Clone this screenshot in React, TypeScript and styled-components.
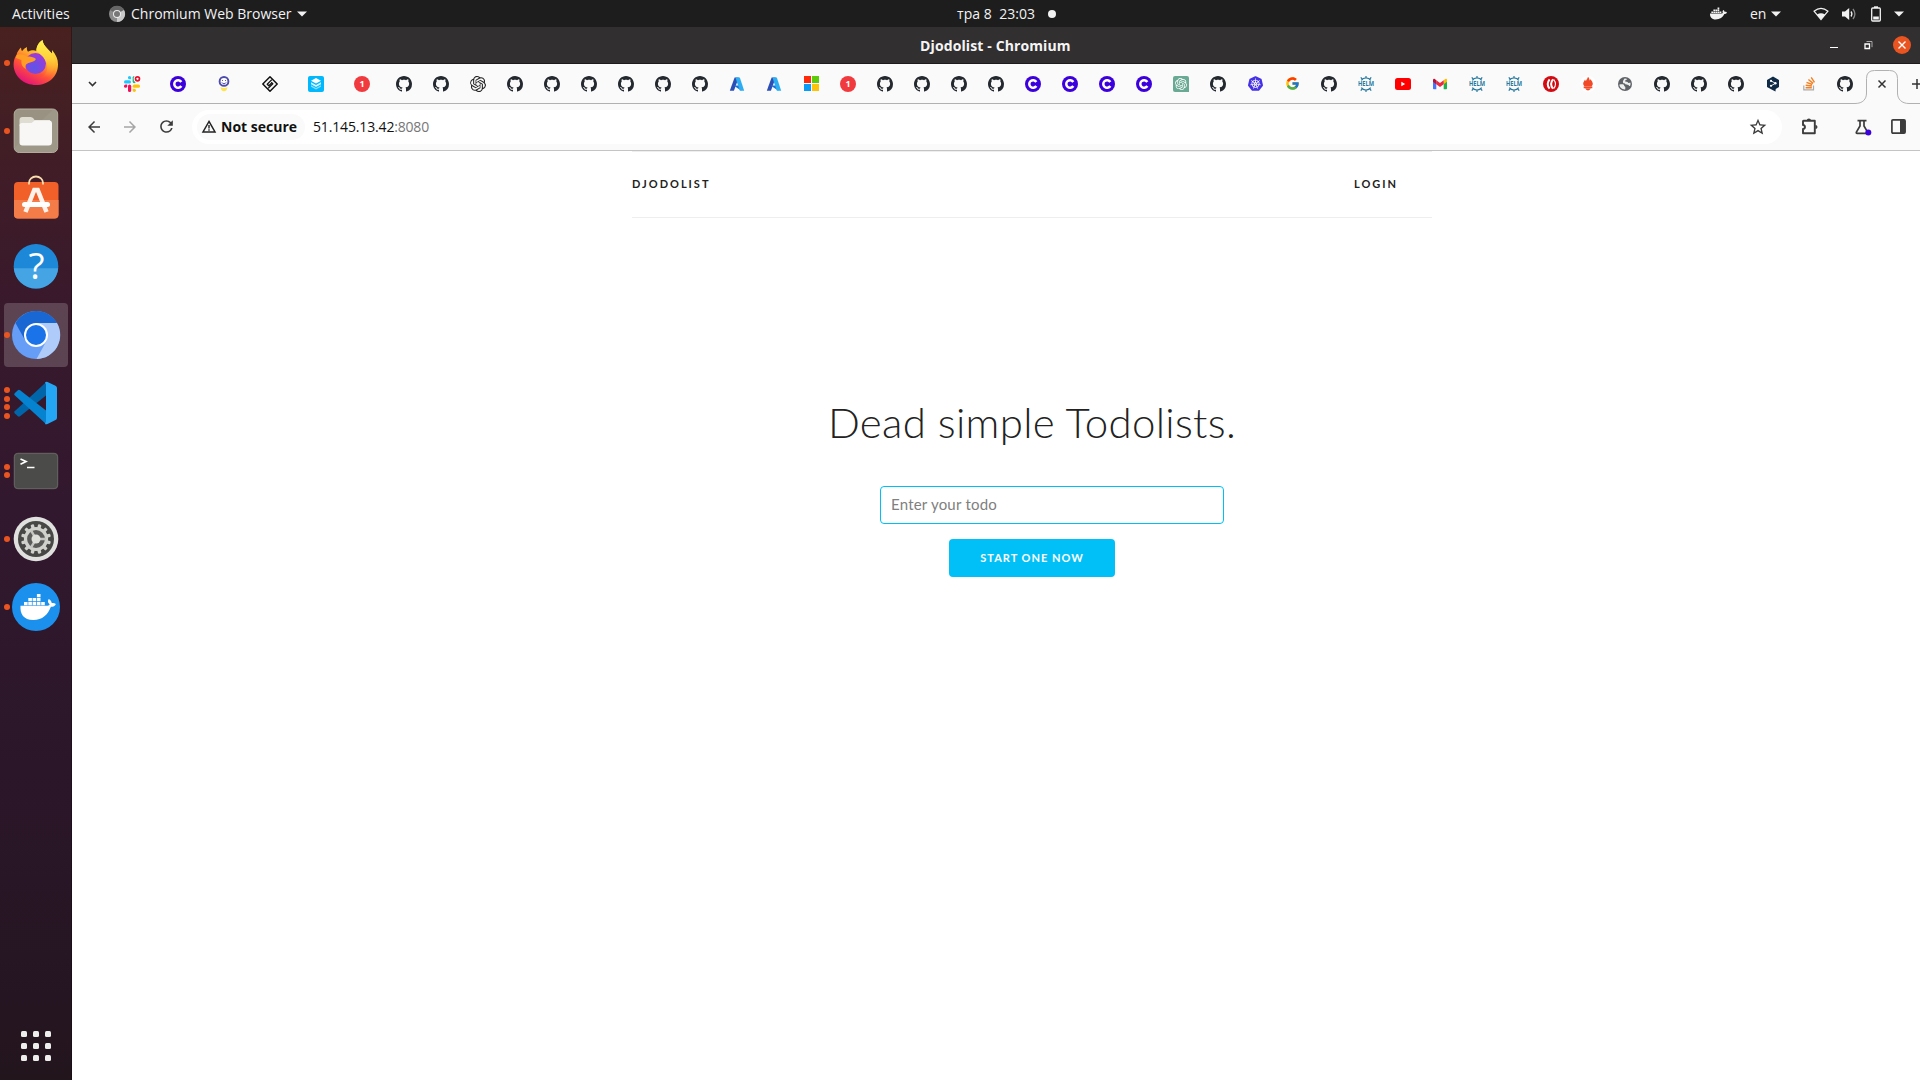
import React from 'react';
import styled, { createGlobalStyle } from 'styled-components';
import { FaDocker } from 'react-icons/fa';
import { FcGoogle } from 'react-icons/fc';
import { SiOpenai, SiKubernetes } from 'react-icons/si';
import { MdArrowBack, MdArrowForward, MdRefresh, MdStarOutline } from 'react-icons/md';

const GlobalStyle = createGlobalStyle`
  * { box-sizing: border-box; }
  html, body { margin: 0; padding: 0; overflow: hidden; background: #fff; }
  svg { display: block; flex: none; overflow: visible; }
`;

const Desktop = styled.div`
  width: 1920px;
  height: 1080px;
  display: flex;
  flex-direction: column;
  overflow: hidden;
  font-family: 'Open Sans', 'Noto Sans', sans-serif;
`;

const TopBar = styled.header`
  height: 27px;
  flex: none;
  background: #1d1d1d;
  color: #f2f2f2;
  display: grid;
  grid-template-columns: 957px 1fr 220px;
  align-items: center;
`;

const BarGroup = styled.div<{ $left?: number }>`
  display: flex;
  align-items: center;
  height: 27px;
  padding-left: ${(p) => p.$left ?? 0}px;
`;

const Label = styled.span<{ $w?: number; $size?: number; $spacing?: number; $bold?: boolean; $color?: string; $pad?: number }>`
  display: block;
  flex: none;
  white-space: pre;
  width: ${(p) => (p.$w ? `${p.$w}px` : 'auto')};
  padding-left: ${(p) => p.$pad ?? 0}px;
  font-size: ${(p) => p.$size ?? 14}px;
  letter-spacing: ${(p) => p.$spacing ?? 0}px;
  font-weight: ${(p) => (p.$bold ? 700 : 400)};
  color: ${(p) => p.$color ?? 'inherit'};
  line-height: 20px;
`;

const Slot = styled.span<{ $w: number }>`
  width: ${(p) => p.$w}px;
  flex: none;
  display: flex;
  align-items: center;
  justify-content: center;
`;

const Status = styled.div`
  display: flex;
  align-items: center;
  gap: 13px;
  padding-left: 32px;
`;

const Dot = styled.span`
  width: 8px;
  height: 8px;
  border-radius: 50%;
  background: #f2f2f2;
  margin-left: 13px;
`;

const Work = styled.div`
  flex: 1;
  display: flex;
  min-height: 0;
`;

const Dock = styled.nav`
  width: 72px;
  flex: none;
  display: flex;
  flex-direction: column;
  align-items: center;
  gap: 4px;
  padding: 4px 0 2px;
  background: linear-gradient(180deg, #48211f 0%, #411d26 12%, #39192b 25%, #32182e 45%, #2b1629 70%, #251522 92%, #23151c 100%);
  border-right: 1px solid rgba(0, 0, 0, 0.3);
`;

const DockItem = styled.div<{ $active?: boolean }>`
  position: relative;
  width: 64px;
  height: 64px;
  flex: none;
  border-radius: 4px;
  display: flex;
  align-items: center;
  justify-content: center;
  background: ${(p) => (p.$active ? 'rgba(255,255,255,0.19)' : 'transparent')};
`;

const Running = styled.div`
  position: absolute;
  left: 0;
  top: 0;
  height: 64px;
  display: flex;
  flex-direction: column;
  justify-content: center;
  gap: 2.8px;
`;

const RunDot = styled.span`
  width: 6px;
  height: 6px;
  border-radius: 50%;
  background: #e95420;
`;

const AppGrid = styled.div`
  margin-top: auto;
  width: 64px;
  height: 64px;
  display: grid;
  grid-template-columns: repeat(3, 6px);
  grid-auto-rows: 6px;
  gap: 6px;
  place-content: center;
`;

const GridDot = styled.span`
  background: #eeeeec;
  border-radius: 1.5px;
`;

const Window = styled.main`
  flex: 1;
  min-width: 0;
  display: flex;
  flex-direction: column;
`;

const TitleBar = styled.div`
  height: 37px;
  flex: none;
  background: #322f30;
  border-bottom: 1px solid #1d1b1c;
  color: #f5f5f5;
  display: grid;
  grid-template-columns: 848px 1fr 107px;
  align-items: center;
`;

const WindowTitle = styled(Label)`
  padding-top: 2px;
`;

const Controls = styled.div`
  display: flex;
  align-items: center;
`;

const TabStrip = styled.div`
  height: 40px;
  flex: none;
  display: flex;
  align-items: stretch;
  background: #fafafa;
  overflow: hidden;
`;

const TabCell = styled.div<{ $w: number; $pad?: number }>`
  width: ${(p) => p.$w}px;
  padding-left: ${(p) => p.$pad ?? 0}px;
  flex: none;
  display: flex;
  align-items: center;
  justify-content: center;
  border-bottom: 1px solid #b1b1b1;
`;

const TabShape = styled.div`
  width: 54px;
  height: 40px;
  flex: none;
`;

const Toolbar = styled.div`
  height: 47px;
  flex: none;
  background: #fafafa;
  border-bottom: 1px solid #c4c4c4;
  display: flex;
  align-items: center;
  padding: 0 0 1px 4px;
  color: #3c3c3c;
`;

const Omnibox = styled.div`
  width: 1590px;
  height: 34px;
  border-radius: 17px;
  background: #fff;
  margin-left: 8px;
  display: flex;
  align-items: center;
  padding: 0 11px 0 5px;
`;

const Chip = styled.div`
  width: 108px;
  height: 26px;
  border-radius: 13px;
  background: #fafafa;
  display: flex;
  align-items: center;
  padding-left: 5px;
  gap: 5px;
  margin-right: 8px;
  color: #111;
`;

const Push = styled.span`
  margin-left: auto;
`;

const Page = styled.section`
  flex: 1;
  background: #fff;
  font-family: Lato, 'Open Sans', sans-serif;
  color: #222;
  padding-left: 72px;
`;

const Container = styled.div`
  width: 800px;
  margin: 0 auto;
  display: flex;
  flex-direction: column;
  align-items: center;
`;

const NavBar = styled.div`
  width: 800px;
  height: 67px;
  border-top: 1px solid #eee;
  border-bottom: 1px solid #eee;
  display: flex;
  justify-content: space-between;
  align-items: center;
  padding: 0 34px 2px 0;
`;

const NavLink = styled.a`
  font-size: 11px;
  font-weight: 700;
  letter-spacing: 2px;
  color: #222;
  text-transform: uppercase;
`;

const Heading = styled.h1`
  margin: 179px 0 0;
  font-size: 42px;
  line-height: 50px;
  font-weight: 300;
  letter-spacing: 0.3px;
  white-space: nowrap;
`;

const TodoInput = styled.input`
  width: 344px;
  height: 38px;
  margin: 39px 0 0 40px;
  padding: 4px 10px 6px;
  border: 1px solid #00bff3;
  border-radius: 4px;
  font-family: inherit;
  font-size: 15px;
  letter-spacing: 0.22px;
  outline: none;
  &::placeholder { color: #808080; opacity: 1; }
`;

const StartButton = styled.button`
  width: 166px;
  height: 38px;
  margin-top: 15px;
  padding: 0 0 2px;
  border: 0;
  border-radius: 4px;
  background: #00c0f7;
  color: #fff;
  font-family: inherit;
  font-size: 11px;
  font-weight: 700;
  letter-spacing: 1px;
`;

const Caret = () => (
  <svg width="10" height="6" viewBox="0 0 10 6"><path d="M0 .5h10L5 5.500z" fill="#f2f2f2" /></svg>
);

const WifiIcon = () => (
  <svg width="16" height="14" viewBox="0 0 16 14">
    <path d="M1 4.200Q8-1.600 15 4.200L8 12.500z" fill="none" stroke="#f2f2f2" strokeWidth="1.200" />
    <path d="M4 7.500Q8 5 12 7.500L8 12.600z" fill="#f2f2f2" />
  </svg>
);

const SoundIcon = () => (
  <svg width="16" height="14" viewBox="0 0 16 14">
    <path d="M0 4.500h3L7.200 1v12L3 9.500H0z" fill="#f2f2f2" />
    <path d="M9 4.500q1.800 2.500 0 5" fill="none" stroke="#f2f2f2" strokeWidth="1.300" />
    <path d="M11 2q3.800 5 0 10" fill="none" stroke="#858585" strokeWidth="1.300" />
  </svg>
);

const BatteryIcon = () => (
  <svg width="10" height="16" viewBox="0 0 10 16">
    <path d="M3 .3h4V2H3z" fill="#f2f2f2" />
    <rect x=".7" y="2" width="8.600" height="13" rx="1" fill="none" stroke="#f2f2f2" strokeWidth="1.300" />
    <path d="M2.200 10.500h5.600v3H2.200z" fill="#f2f2f2" />
  </svg>
);

const ChromiumMono = () => (
  <svg width="16" height="16" viewBox="0 0 16 16">
    <circle cx="8" cy="8" r="8" fill="#8b8b8b" />
    <path d="M8 8 1 4A8 8 0 0 1 15 4z" fill="#666" />
    <path d="M8 8 15 4A8 8 0 0 1 8 16z" fill="#c9c9c9" />
    <circle cx="8" cy="8" r="4" fill="#ececec" />
    <circle cx="8" cy="8" r="3" fill="#777" />
  </svg>
);

const GithubIcon = () => (
  <svg width="16" height="16" viewBox="0 0 16 16">
    <path fill="#24292f" d="M8 0C3.58 0 0 3.58 0 8c0 3.54 2.29 6.53 5.47 7.59.4.07.55-.17.55-.38 0-.19-.01-.82-.01-1.49-2.01.37-2.53-.49-2.69-.94-.09-.23-.48-.94-.82-1.13-.28-.15-.68-.52-.01-.53.63-.01 1.08.58 1.23.82.72 1.21 1.87.87 2.33.66.07-.52.28-.87.51-1.07-1.78-.2-3.64-.89-3.64-3.95 0-.87.31-1.59.82-2.15-.08-.2-.36-1.02.08-2.12 0 0 .67-.21 2.2.82.64-.18 1.32-.27 2-.27.68 0 1.36.09 2 .27 1.53-1.04 2.2-.82 2.2-.82.44 1.1.16 1.92.08 2.12.51.56.82 1.27.82 2.15 0 3.07-1.87 3.75-3.65 3.95.29.25.54.73.54 1.48 0 1.07-.01 1.93-.01 2.2 0 .21.15.46.55.38A8.013 8.013 0 0 0 16 8c0-4.42-3.58-8-8-8z" />
  </svg>
);

const SlackIcon = () => (
  <svg width="16" height="16" viewBox="0 0 16 16">
    <g fill="#1ec8ff">
      <rect x="0" y="4.300" width="7" height="3.200" rx="1.600" /><path d="M3.900 1.600a1.600 1.600 0 0 1 3.200 0v1.700H5.500a1.600 1.600 0 0 1-1.600-1.700z" />
    </g>
    <rect x="8.600" y="0" width="3.200" height="7.200" rx="1.600" fill="#20b486" />
    <g fill="#ffc107">
      <rect x="8.700" y="8.600" width="7.300" height="3.200" rx="1.600" /><path d="M8.700 12.700h1.600a1.600 1.600 0 1 1-1.600 1.600z" />
    </g>
    <g fill="#f0105a">
      <rect x="4" y="8.600" width="3.200" height="7.400" rx="1.600" /><path d="M3.200 8.600v1.600a1.600 1.600 0 1 1-1.600-1.600z" />
    </g>
    <circle cx="13.500" cy="2.800" r="3.800" fill="#fff" />
    <circle cx="13.500" cy="2.800" r="2" fill="#fff" stroke="#e8112d" strokeWidth="1.700" />
  </svg>
);

const CIcon = () => (
  <svg width="16" height="16" viewBox="0 0 16 16">
    <circle cx="8" cy="8" r="8" fill="#3c00dc" />
    <path d="M11.300 6A3.800 3.800 0 1 0 11.300 10" fill="none" stroke="#fff" strokeWidth="2.500" />
  </svg>
);

const BulbIcon = () => (
  <svg width="12" height="16" viewBox="0 0 12 16">
    <circle cx="6" cy="5.400" r="4.400" fill="#fff" stroke="#4e4aae" strokeWidth="1.900" />
    <path d="M4 4.500h.9M7.100 4.500H8M3.900 6.400a2.300 2.300 0 0 0 4.200 0" fill="none" stroke="#4e4aae" strokeWidth="1" />
    <path d="M2.400 11.300Q6 12.600 9.600 11.300L8.400 14.300Q6 16.400 3.600 14.300z" fill="#ffe44d" />
  </svg>
);

const DiamondIcon = () => (
  <svg width="16" height="16" viewBox="0 0 16 16" fill="none" stroke="#111" strokeWidth="1.500" strokeLinejoin="round">
    <path d="M8 .8 15.200 8 8 15.200.8 8z" />
    <path d="M9.800 3.600 5.200 8.200l1.600 1.600 3.400-3.400M6.200 12.400l4.600-4.600-1.600-1.600" strokeWidth="1.300" />
  </svg>
);

const StackIcon = () => (
  <svg width="16" height="16" viewBox="0 0 16 16">
    <rect width="16" height="16" rx="2" fill="#00b8fb" />
    <path d="m8 2 5 2.700-5 2.700-5-2.700z" fill="#fff" />
    <path d="m3 6.300 5 2.700 5-2.700v2l-5 2.700-5-2.700z" fill="#d4f2ff" />
    <path d="m3 9.300 5 2.700 5-2.700v1.500l-5 2.700-5-2.700z" fill="#8adcff" />
  </svg>
);

const OneIcon = () => (
  <svg width="16" height="16" viewBox="0 0 16 16">
    <circle cx="8" cy="8" r="8" fill="#f03a3e" />
    <text x="8" y="11.200" textAnchor="middle" fontFamily="Open Sans, sans-serif" fontSize="9" fontWeight="700" fill="#fff">1</text>
  </svg>
);

const AzureIcon = () => (
  <svg width="16" height="16" viewBox="0 0 16 16">
    <path d="M5.600 1.500h4.200L4.900 14.700H.8z" fill="#2b4fb5" />
    <path d="M4.500 9.400h6.800l2 4-1.200 1.200z" fill="#1f6fd6" />
    <path d="M6.500 1.500h4.300l4.400 13.200h-4.300L7.700 5.400z" fill="#2daef2" />
  </svg>
);

const MicrosoftIcon = () => (
  <svg width="15" height="15" viewBox="0 0 15 15">
    <path d="M0 0h7v7H0z" fill="#ff2a0a" /><path d="M8 0h7v7H8z" fill="#5ccb0a" />
    <path d="M0 8h7v7H0z" fill="#0a9cf5" /><path d="M8 8h7v7H8z" fill="#ffc20a" />
  </svg>
);

const GptIcon = () => (
  <svg width="16" height="16" viewBox="0 0 16 16">
    <path d="M2 0h12a2 2 0 0 1 2 2v14H2a2 2 0 0 1-2-2V2a2 2 0 0 1 2-2z" fill="#6aaa95" />
    <g transform="translate(2 2)"><SiOpenai size={12} color="#fff" /></g>
  </svg>
);

const KubeIcon = () => <SiKubernetes size={15} color="#4632e6" />;

const HelmIcon = () => (
  <svg width="16" height="16" viewBox="0 0 16 16" fill="none" stroke="#277a9f" strokeWidth="1.200">
    <path d="M3.300 4.300a5.800 5.800 0 0 1 9.400 0M3.300 11.700a5.800 5.800 0 0 0 9.400 0M8 2V0M8 14v2M4.200 3.200 2.800 1.400M11.800 3.200l1.400-1.800M4.200 12.800l-1.400 1.800M11.800 12.800l1.400 1.800" />
    <text x="8" y="10.300" textAnchor="middle" textLength="16" lengthAdjust="spacingAndGlyphs" fontFamily="Open Sans, sans-serif" fontSize="6.500" fontWeight="700" fill="#277a9f" stroke="none">HELM</text>
  </svg>
);

const YoutubeIcon = () => (
  <svg width="16" height="12" viewBox="0 0 16 12">
    <rect width="16" height="12" rx="2.500" fill="#f00" /><path d="M6.300 3.800v4.400L10.200 6z" fill="#fff" />
  </svg>
);

const GmailIcon = () => (
  <svg width="14" height="12" viewBox="0 0 14 12">
    <path d="M0 2v8.500c0 .5.4.8.8.8H3.300V4z" fill="#4a73f5" />
    <path d="M14 2v8.500c0 .5-.4.8-.8.8h-2.500V4z" fill="#1fb14c" />
    <path d="M10.700 2.200 12.300 1C13.300.4 14 1 14 2.100v1.700l-3.300 2.500z" fill="#fbbc04" />
    <path d="M3.300 6.300V2.200L7 5l3.700-2.800v4.100L7 9.100z" fill="#ea2a3f" />
    <path d="M0 2.100C0 1 1 .3 1.800 1l1.500 1.200v4.100L0 3.800z" fill="#b70f35" />
  </svg>
);

const RedRingIcon = () => (
  <svg width="16" height="16" viewBox="0 0 16 16">
    <circle cx="8" cy="8" r="8" fill="#d20a11" />
    <path d="M6.600 3.300Q2.800 8 6.600 12.700M10 3.300Q6.200 8 10 12.700" fill="none" stroke="#fff" strokeWidth="2" />
    <path d="M10.600 3.300Q14.400 8 10.600 12.700" fill="none" stroke="#fff" strokeWidth="1.100" />
  </svg>
);

const PrometheusIcon = () => (
  <svg width="16" height="16" viewBox="0 0 16 16">
    <circle cx="8" cy="8" r="8" fill="#fff" />
    <path d="M8 .8c1.700 1.600 1.400 3.200 1.600 3.800.6-.4.8-1 .8-1.700 1.500 2 2.300 3.400 2.400 4.600 0 1.400-.7 2.200-1.200 2.700H4.400c-.7-.8-1.200-1.400-1.200-2.700.1-1.200.9-2.200 1.800-4 .2.8.6 1.200 1 1.500C6.200 4 7.400 3 8 .8zM3.700 10.500h8.600v1.800H3.700zM5.200 12.600h5.600Q8 16.500 5.200 12.600z" fill="#f04a28" />
  </svg>
);

const GlobeIcon = () => (
  <svg width="14" height="14" viewBox="0 0 14 14">
    <circle cx="7" cy="7" r="7" fill="#5f6368" />
    <path d="M1.400 7.600C3 7.500 4.500 7 5.500 7.600c1 .8.3 1.500 1.300 1.900.9.400.5 1.300.4 2.900-3 .3-5.700-1.700-5.800-4.800zM6.500 1.500c1.200-.1 2 .1 2.800.5-.3 1-1.800.8-2 1.500-.2 1 .3 1.300 1.300 1.200 1-.2 1.300 1 2 1.200.6.200 1.200-.3 1.900-.1.200 1.200 0 2.400-.5 3.300-1 .1-1.200-1-2.100-1.300-1-.3-2 .1-2.600-.8-.5-.8-1.700-.5-2.200-1.300-.5-1 .2-2.700 1.400-4.200z" fill="#fafafa" opacity=".92" />
  </svg>
);

const DeeplIcon = () => (
  <svg width="14" height="16" viewBox="0 0 14 16">
    <path d="M7 .5 13 4v7l-3.300 2-.2 2.500-2.500-1.300L1 11V4z" fill="#0f2b46" />
    <path d="m5 4.800 4.300 2.500L5 9.900" fill="none" stroke="#fff" strokeWidth=".9" />
    <circle cx="5" cy="4.900" r="1.100" fill="#fff" /><circle cx="9.400" cy="7.300" r="1.200" fill="#fff" /><circle cx="5" cy="9.800" r="1.100" fill="#fff" />
  </svg>
);

const OverflowIcon = () => (
  <svg width="13" height="15" viewBox="0 0 13 15" fill="none">
    <path d="M.8 9.600v4.200h9.700V9.600" stroke="#aaa" strokeWidth="1.200" />
    <path d="M2.600 11.700h6.200M2.700 9.200l6.200.8M3.500 6.400l5.800 2.100M5.400 3.500l4.700 3.900M8.200 1.400l3.300 5" stroke="#f48024" strokeWidth="1.400" />
  </svg>
);

const DarkGpt = () => <SiOpenai size={16} color="#222" />;
const GoogleIcon = () => <FcGoogle size={15} />;

const pinned = [SlackIcon, CIcon, BulbIcon, DiamondIcon, StackIcon, OneIcon];
const tabs = [
  GithubIcon, GithubIcon, DarkGpt,
  GithubIcon, GithubIcon, GithubIcon, GithubIcon, GithubIcon, GithubIcon,
  AzureIcon, AzureIcon, MicrosoftIcon, OneIcon,
  GithubIcon, GithubIcon, GithubIcon, GithubIcon,
  CIcon, CIcon, CIcon, CIcon,
  GptIcon, GithubIcon, KubeIcon, GoogleIcon, GithubIcon, HelmIcon, YoutubeIcon, GmailIcon,
  HelmIcon, HelmIcon, RedRingIcon, PrometheusIcon, GlobeIcon,
  GithubIcon, GithubIcon, GithubIcon, DeeplIcon,
];

const FirefoxApp = () => (
  <svg width="46" height="48" viewBox="0 0 46 48">
    <defs>
      <linearGradient id="ffBody" x1=".8" y1=".1" x2=".3" y2="1">
        <stop offset="0" stopColor="#fff04a" /><stop offset=".35" stopColor="#ffb02a" />
        <stop offset=".65" stopColor="#ff5238" /><stop offset="1" stopColor="#e3107d" />
      </linearGradient>
      <radialGradient id="ffGlobe" cx=".45" cy=".7" r=".7">
        <stop offset="0" stopColor="#5c55e8" /><stop offset="1" stopColor="#a337d8" />
      </radialGradient>
      <linearGradient id="ffTail" x1="0" y1="0" x2="0" y2="1">
        <stop offset="0" stopColor="#fff44f" /><stop offset=".5" stopColor="#ffcf3a" /><stop offset="1" stopColor="#ff8a30" stopOpacity="0" />
      </linearGradient>
    </defs>
    <path d="M3.500 16C4 13 6 10.500 8 8.500c0 1.500.4 2.600 1 3.700C10.500 10 12.500 8.800 14 8c-.4 2 .1 3.500 1 4.700C18.500 11 21 11 23.500 12 23 8 26 3 29.500 1c.5 5 4 7.500 7 11l2.500 2.500V11c4 4.500 6 9 6 14.500C45 38 35 46 23 46S.6 37.500.6 25.500C.6 22 1.500 18.500 3.500 16z" fill="url(#ffBody)" />
    <circle cx="22.500" cy="24.500" r="10.500" fill="url(#ffGlobe)" />
    <path d="M23.500 12C23 8 26 3 29.500 1c.5 5 4 7.500 7 11 5 5 7 10 4.500 18-2.500 7-9 10-14 9 8-3 9-12 5-18-2-4-5-6-8.500-9z" fill="url(#ffTail)" />
    <path d="M3.500 16C6 14.500 11 15 14 17.500c3 0 7 .2 9 2.500-1 2.500-4 3-7.500 4-3 1-3.500 3-2.500 6-4-2-5-5-4.500-9L3 19z" fill="#ff9d25" />
  </svg>
);

const FilesApp = () => (
  <svg width="46" height="46" viewBox="0 0 46 46">
    <rect x="1.200" y="1" width="43.500" height="43.500" rx="5" fill="#999283" stroke="#b4b09f" />
    <path d="M1.500 40 40 1.500q4.500 0 4.500 5v32q0 6-6 6H6.500q-5 0-5-4.500z" fill="#a49e90" opacity=".5" />
    <path d="M6.500 12q0-3 3-3h8q2 0 3 1.500l1 1.500H37v6H6.500z" fill="#dfdcd2" />
    <path d="M6.500 17.500q0-2.500 2.500-2.500h9.500l3.200-2.500H36q3 0 3 3V34q0 3.500-3.500 3.500h-26q-3 0-3-3z" fill="#f8f7f6" />
  </svg>
);

const SoftwareApp = () => (
  <svg width="46" height="46" viewBox="0 2.500 46 46">
    <rect x="1" y="8.500" width="44.500" height="36.500" rx="4" fill="#f06028" />
    <path d="M1 26.500h44.500v14.500q0 4-4 4H5q-4 0-4-4z" fill="#f47c49" />
    <path d="M16 11V9.500a7 6.500 0 0 1 14 0V11" fill="none" stroke="#f8dcae" strokeWidth="1.800" />
    <path d="m12.500 38.500 8.800-22h3.400l8.800 22" fill="none" stroke="#fff2eb" strokeWidth="4.500" />
    <path d="M11.500 31h23" stroke="#fff" strokeWidth="5" strokeLinecap="round" />
  </svg>
);

const HelpApp = () => (
  <svg width="46" height="46" viewBox="0 .7 46 46">
    <circle cx="23" cy="23" r="22.300" fill="#1e88d8" />
    <path d="M.8 25h44.400a22.300 22.300 0 0 1-44.400 0z" fill="#44a4e4" />
    <text x="23.500" y="36" textAnchor="middle" fontFamily="Open Sans, sans-serif" fontSize="37" fill="#fff">?</text>
  </svg>
);

const ChromiumApp = () => (
  <svg width="48" height="48" viewBox="0 0 48 48">
    <circle cx="24" cy="24" r="24" fill="#669df6" />
    <path d="M3.500 12A24 24 0 0 1 45 12H24L13.500 30z" fill="#1967d2" />
    <path d="M24 12h21A24 24 0 0 1 24.500 48L35 29z" fill="#aecbfa" />
    <circle cx="24" cy="24" r="12" fill="#fff" />
    <circle cx="24" cy="24" r="10" fill="#1a73e8" />
  </svg>
);

const CodeApp = () => (
  <svg width="43" height="43" viewBox="0 0.500 43 43">
    <path d="M.4 30q-.5 1 .5 2l3 2.800q1 .8 2.200 0L32 14V.8z" fill="#0065a9" />
    <path d="M.4 13.500q-.5-1 .5-2l3-2.800q1-.8 2.200 0L32 29v13.500z" fill="#0583d0" />
    <path d="M31 42.500q1 .5 2.500 0l8-4Q43 38 43 36V6.500q0-1.500-1.500-2.300l-8-3.700Q32 0 31 1l1 2v37z" fill="#25a6f4" />
  </svg>
);

const TerminalApp = () => (
  <svg width="46" height="38" viewBox="0 0 46 38">
    <rect x="1.300" y="1.300" width="43.400" height="35.400" rx="3.500" fill="#4b4b4a" stroke="#686866" />
    <path d="m7.500 7 5.500 2.500-5.500 2.700M14 15.500h7.500" fill="none" stroke="#fff" strokeWidth="1.700" />
  </svg>
);

const teeth = Array.from({ length: 12 }, (_, i) => i * 30);
const SettingsApp = () => (
  <svg width="46" height="46" viewBox="0 0 46 46">
    <circle cx="23" cy="23" r="22.300" fill="#e0e0de" />
    <circle cx="23" cy="23" r="18" fill="#474745" />
    {teeth.map((a) => <rect key={a} x="21.300" y="8" width="3.400" height="5" rx="1" fill="#d0d0cd" transform={`rotate(${a + 15} 23 23)`} />)}
    <circle cx="23" cy="23" r="10.500" fill="#5b5b59" stroke="#d0d0cd" strokeWidth="3.200" />
    <path d="M23 23h10M23 23l-5 8.700M23 23l-5-8.700" stroke="#c4c4c1" strokeWidth="2.500" />
    <circle cx="23" cy="23" r="4.500" fill="#dededb" />
  </svg>
);

const DockerApp = () => (
  <svg width="48" height="48" viewBox="0 0 48 48">
    <circle cx="24" cy="24" r="24" fill="#1c90ed" />
    <path d="M8.500 22.800h27c1.500 0 2.200-.7 2-1.700-1.800-1.300-2-3-.8-5 1.800.7 2.800 2.300 3 4 1.500-.2 3-.1 4.200.8-.8 2-2.500 2.900-5 2.900-3 8-8.500 13.200-17.500 13.200-10 0-13.500-6-12.900-14.200z" fill="#fff" />
    <path d="M12 19h3.600v3.300H12zM16.300 19h3.600v3.300h-3.600zM20.600 19h3.600v3.300h-3.600zM24.900 19h3.600v3.300h-3.600zM29.200 19h3.600v3.300h-3.600zM16.300 15h3.600v3.300h-3.600zM20.600 15h3.600v3.300h-3.600zM24.900 15h3.600v3.300h-3.600zM24.900 11h3.600v3.300h-3.600z" fill="#fff" />
  </svg>
);

const WarningIcon = () => (
  <svg width="14" height="13" viewBox="0 0 14 13">
    <path d="M7 1.400 13 12H1z" fill="none" stroke="#222" strokeWidth="1.500" />
    <path d="M7 5v3.500M7 9.300v1.500" stroke="#222" strokeWidth="1.400" />
  </svg>
);

const PuzzleIcon = () => (
  <svg width="17" height="17" viewBox="0 0 17 17">
    <path d="M2.500 2.800h11.300v12.400H2v-4.200c2.600-.2 2.600-3.700 0-4V3.300q0-.5.500-.5z" fill="none" stroke="#3c3c3c" strokeWidth="1.900" strokeLinejoin="round" />
    <path d="M5.800 2.500a2.100 2.100 0 0 1 4.200 0zM14.400 6.900a2.100 2.100 0 0 1 0 4.200z" fill="#3c3c3c" />
  </svg>
);

const FlaskIcon = () => (
  <svg width="16" height="16" viewBox="0 0 16 16">
    <path d="M2.500 1.700h9M5 2v5L1.400 13q-.5 1.300.8 1.300h9.600q1.300 0 .8-1.300L9 7V2" fill="none" stroke="#3c3c3c" strokeWidth="1.700" />
    <circle cx="13.300" cy="13.500" r="3" fill="#3c00dc" />
  </svg>
);

const PanelIcon = () => (
  <svg width="15" height="15" viewBox="0 0 15 15">
    <rect x=".9" y=".9" width="13.200" height="13.200" rx="1" fill="none" stroke="#3c3c3c" strokeWidth="1.700" />
    <path d="M9 1h5v13H9z" fill="#3c3c3c" />
  </svg>
);

const apps = [
  { Icon: FirefoxApp, dots: 1 }, { Icon: FilesApp, dots: 1 }, { Icon: SoftwareApp, dots: 0 },
  { Icon: HelpApp, dots: 0 }, { Icon: ChromiumApp, dots: 1, active: true }, { Icon: CodeApp, dots: 4 },
  { Icon: TerminalApp, dots: 2 }, { Icon: SettingsApp, dots: 1 }, { Icon: DockerApp, dots: 1 },
];

const range = (n: number) => Array.from({ length: n }, (_, i) => i);

export default function App() {
  return (
    <Desktop>
      <GlobalStyle />
      <TopBar>
        <BarGroup $left={12}>
          <Label $w={97}>Activities</Label>
          <ChromiumMono />
          <Label $w={172} $pad={6}>Chromium Web Browser</Label>
          <Caret />
        </BarGroup>
        <BarGroup>
          <Label $spacing={0.05}>тра 8  23:03</Label>
          <Dot />
        </BarGroup>
        <BarGroup>
          <Slot $w={36}><FaDocker size={17} color="#f2f2f2" /></Slot>
          <Label $w={35} $pad={14}>en</Label>
          <Caret />
          <Status>
            <WifiIcon />
            <SoundIcon />
            <BatteryIcon />
            <Caret />
          </Status>
        </BarGroup>
      </TopBar>
      <Work>
        <Dock>
          {apps.map(({ Icon, dots, active }, i) => (
            <DockItem key={i} $active={active}>
              <Running>{range(dots).map((d) => <RunDot key={d} />)}</Running>
              <Icon />
            </DockItem>
          ))}
          <AppGrid>{range(9).map((d) => <GridDot key={d} />)}</AppGrid>
        </Dock>
        <Window>
          <TitleBar>
            <span />
            <WindowTitle $bold $spacing={0.12}>Djodolist - Chromium</WindowTitle>
            <Controls>
              <Slot $w={42}>
                <svg width="8" height="10" viewBox="0 0 8 10"><path d="M0 7.500h8" stroke="#fff" /></svg>
              </Slot>
              <Slot $w={27}>
                <svg width="9" height="9" viewBox="0 0 9 9" fill="none"><path d="M1 3h4.500v4.500H1z" stroke="#fff" strokeWidth="1.300" /><path d="M2.500.5H8v5.700" stroke="#aaa" /></svg>
              </Slot>
              <Slot $w={40}>
                <svg width="18" height="18" viewBox="0 0 18 18"><circle cx="9" cy="9" r="9" fill="#e95420" /><path d="m5.500 5.500 7 7m0-7-7 7" stroke="#fff" strokeWidth="1.400" /></svg>
              </Slot>
            </Controls>
          </TitleBar>
          <TabStrip>
            <TabCell $w={37} $pad={3}>
              <svg width="9" height="6" viewBox="0 0 9 6"><path d="m1 1 3.500 3.500L8 1" fill="none" stroke="#333" strokeWidth="1.600" /></svg>
            </TabCell>
            {pinned.map((Icon, i) => <TabCell key={i} $w={46}><Icon /></TabCell>)}
            {tabs.map((Icon, i) => <TabCell key={i} $w={37} $pad={1}><Icon /></TabCell>)}
            <TabCell $w={36}><OverflowIcon /></TabCell>
            <TabCell $w={28} $pad={8}><GithubIcon /></TabCell>
            <TabShape>
              <svg width="54" height="40" viewBox="0 0 54 40" fill="none">
                <path d="M0 39.500C8 39.500 11.500 35 11.500 29V14.500q0-8 8-8h15q8 0 8 8V29c0 6 4 10.500 11.500 10.500" stroke="#b1b1b1" />
                <path d="m23.500 16.500 7 7m0-7-7 7" stroke="#333" strokeWidth="1.500" />
              </svg>
            </TabShape>
            <TabCell $w={16}>
              <svg width="10" height="10" viewBox="0 0 10 10"><path d="M0 5h10M5 0v10" stroke="#333" strokeWidth="1.500" /></svg>
            </TabCell>
          </TabStrip>
          <Toolbar>
            <Slot $w={36}><MdArrowBack size={18} /></Slot>
            <Slot $w={36}><MdArrowForward size={18} color="#a5a5a5" /></Slot>
            <Slot $w={36}><MdRefresh size={19} /></Slot>
            <Omnibox>
              <Chip>
                <WarningIcon />
                <Label $bold>Not secure</Label>
              </Chip>
              <Label $color="#111" $spacing={-0.15}>51.145.13.42</Label>
              <Label $color="#777" $spacing={-0.2}>:8080</Label>
              <Push />
              <Slot $w={26}><MdStarOutline size={20} /></Slot>
            </Omnibox>
            <Slot $w={54}><PuzzleIcon /></Slot>
            <Slot $w={54}><FlaskIcon /></Slot>
            <Slot $w={16}><PanelIcon /></Slot>
          </Toolbar>
          <Page>
            <Container>
              <NavBar>
                <NavLink>Djodolist</NavLink>
                <NavLink>Login</NavLink>
              </NavBar>
              <Heading>Dead simple Todolists.</Heading>
              <TodoInput placeholder="Enter your todo" />
              <StartButton>START ONE NOW</StartButton>
            </Container>
          </Page>
        </Window>
      </Work>
    </Desktop>
  );
}
